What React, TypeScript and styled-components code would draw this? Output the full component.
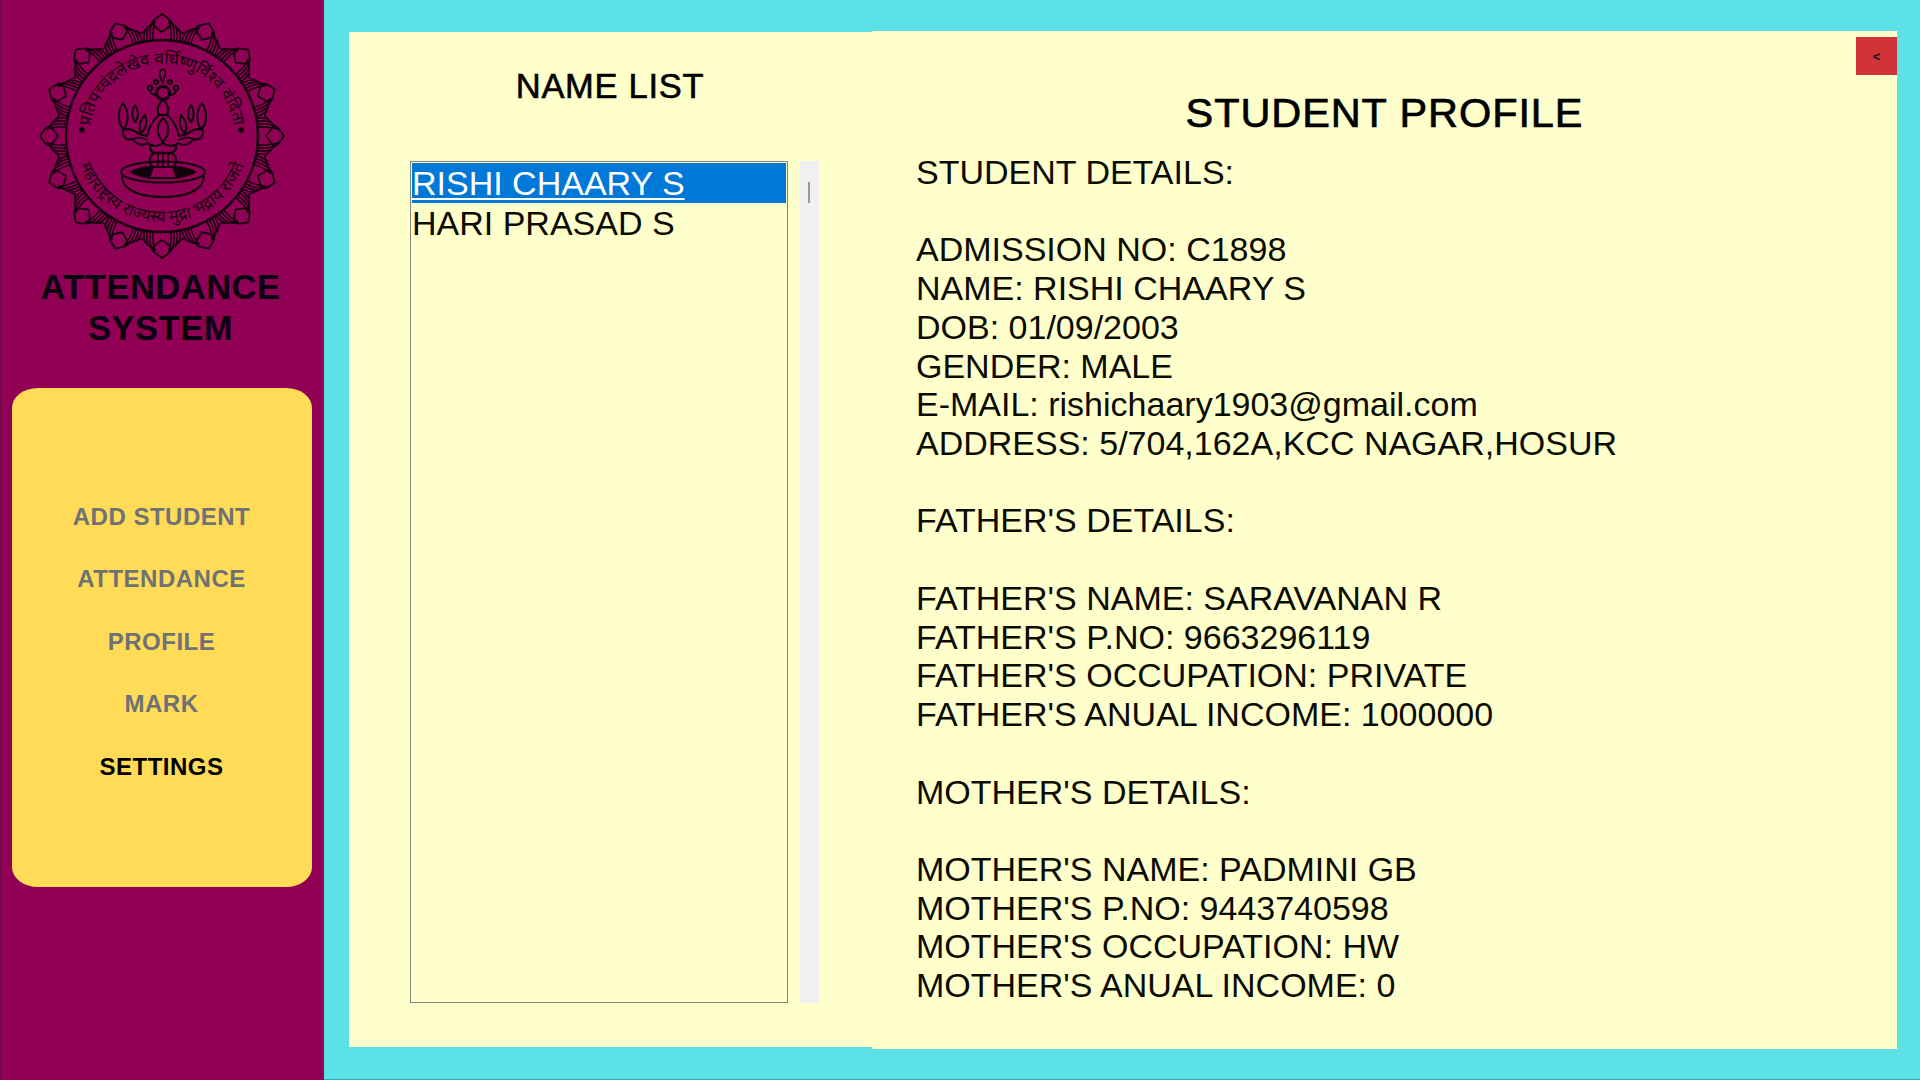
import React from "react";
import styled, { createGlobalStyle } from "styled-components";

const Global = createGlobalStyle`
  html, body { margin: 0; padding: 0; width: 100%; height: 100%; overflow: hidden; }
  body { font-family: "Liberation Sans", Arial, sans-serif; background: #5ce1e6; }
`;

const Page = styled.div`
  display: flex;
  width: 1920px;
  height: 1080px;
`;

const Sidebar = styled.aside`
  display: flex;
  flex: none;
  flex-direction: column;
  align-items: center;
  box-sizing: border-box;
  width: 324px;
  height: 1080px;
  padding-right: 2px;
  background: #900055;
  border-left: 1px solid #6e0a45;
`;

const Emblem = styled.svg`
  display: block;
  flex: none;
  align-self: flex-start;
  margin-left: -1px;
  width: 324px;
  height: 267px;
`;

const AppTitle = styled.h1`
  margin: 0 2px 0 0;
  font-size: 34.5px;
  line-height: 41px;
  font-weight: 700;
  text-align: center;
  color: #0b0010;
  letter-spacing: 0.5px;
`;

const NavCard = styled.nav`
  display: flex;
  flex: none;
  flex-direction: column;
  box-sizing: border-box;
  width: 300px;
  height: 499px;
  margin-top: 39px;
  padding-top: 98px;
  background: #ffdb58;
  border-radius: 26px / 20px;
`;

const NavItem = styled.div<{ $active?: boolean }>`
  height: 62.4px;
  line-height: 62.4px;
  text-align: center;
  font-size: 24px;
  font-weight: 700;
  letter-spacing: 0.5px;
  color: ${(p) => (p.$active ? "#000" : "#6e7275")};
`;

const Main = styled.main`
  flex: 1;
  display: flex;
  align-items: flex-start;
  box-sizing: border-box;
  height: 1080px;
  padding: 31px 0 0 25px;
  background: #5ce1e6;
  border-bottom: 1px solid #3ba9ad;
`;

const ListPanel = styled.section`
  flex: none;
  box-sizing: border-box;
  width: 523px;
  height: 1015px;
  margin-top: 1px;
  padding: 21px 0 0 61px;
  background: #ffffcc;
`;

const ListTitle = styled.h2`
  width: 400px;
  margin: 0 0 42px;
  font-size: 34.5px;
  line-height: 66px;
  font-weight: 400;
  letter-spacing: 0.7px;
  text-align: center;
  color: #000;
  -webkit-text-stroke: 0.6px #000;
`;

const ListRow = styled.div`
  display: flex;
  gap: 12px;
`;

const NameBox = styled.div`
  box-sizing: border-box;
  width: 378px;
  height: 842px;
  padding: 1px;
  border: 1px solid #86867c;
`;

const NameItem = styled.div<{ $selected?: boolean }>`
  height: 40px;
  line-height: 40px;
  font-size: 34px;
  white-space: nowrap;
  color: ${(p) => (p.$selected ? "#fff" : "#0b0b00")};
  background: ${(p) => (p.$selected ? "#0078d7" : "transparent")};
  text-decoration: ${(p) => (p.$selected ? "underline" : "none")};
  text-decoration-thickness: 2px;
  text-underline-offset: 3px;
`;

const ScrollTrack = styled.div`
  box-sizing: border-box;
  width: 19px;
  height: 842px;
  padding: 21px 0 0 8px;
  background: #f0f0f0;
`;

const ScrollThumb = styled.div`
  width: 2px;
  height: 21px;
  background: #999;
`;

const ProfilePanel = styled.section`
  position: relative;
  flex: none;
  box-sizing: border-box;
  width: 1025px;
  height: 1018px;
  padding-top: 52px;
  background: #ffffcc;
`;

const CloseButton = styled.div`
  position: absolute;
  top: 6px;
  right: 0;
  display: flex;
  align-items: center;
  justify-content: center;
  width: 41px;
  height: 38px;
  background: #d13438;
  color: #111;
  font-size: 13px;
  font-weight: 700;
`;

const ProfileTitle = styled.h2`
  margin: 0 0 10px;
  font-size: 41.5px;
  line-height: 60px;
  font-weight: 400;
  letter-spacing: 0.9px;
  text-align: center;
  color: #000;
  -webkit-text-stroke: 0.7px #000;
`;

const Details = styled.div`
  padding-left: 44px;
  font-size: 34px;
  line-height: 38.72px;
  color: #0b0b00;
  white-space: nowrap;
`;

const DetailLine = styled.div<{ $gap?: boolean }>`
  margin-top: ${(p) => (p.$gap ? "38.72px" : "0")};
`;

const CX = 162;
const CY = 136;

const polar = (r: number, deg: number) => {
  const a = ((deg - 90) * Math.PI) / 180;
  return [CX + r * Math.cos(a), CY + r * Math.sin(a)];
};

const f = (n: number) => n.toFixed(1);

const petalPath = (deg: number, r0: number, r1: number, w: number) => {
  const [x0, y0] = polar(r0, deg);
  const [x1, y1] = polar(r1, deg);
  const [ax, ay] = polar(r0 + (r1 - r0) * 0.55, deg - w);
  const [bx, by] = polar(r0 + (r1 - r0) * 0.55, deg + w);
  return `M${f(x0)} ${f(y0)}C${f(ax)} ${f(ay)} ${f(ax)} ${f(ay)} ${f(x1)} ${f(y1)}C${f(bx)} ${f(by)} ${f(bx)} ${f(by)} ${f(x0)} ${f(y0)}Z`;
};

const flame = (deg: number, lean: number, len: number, hook: number) => {
  const [x0, y0] = polar(97, deg);
  const [cx, cy] = polar(97 + len * 0.6, deg);
  const [x1, y1] = polar(97 + len, deg + lean);
  const [x2, y2] = polar(97 + len - 3, deg + hook);
  return `M${f(x0)} ${f(y0)}Q${f(cx)} ${f(cy)} ${f(x1)} ${f(y1)}L${f(x2)} ${f(y2)}`;
};

const PETALS = Array.from({ length: 16 }, (_, i) => i * 22.5);
const FLAMES = PETALS.flatMap((base) => {
  const out: string[] = [];
  for (let k = 0; k < 4; k++) {
    const off = 5.2 + k * 1.8;
    const len = 18 - k * 2.4;
    out.push(flame(base + off, -1.8, len, 0.6));
    out.push(flame(base + 22.5 - off, 1.8, len, -0.6));
  }
  return out;
});

const INK = "#12000c";

const Seal = () => (
  <Emblem viewBox="0 0 324 267" aria-label="Emblem">
    <g fill="none" stroke={INK} strokeWidth="1.5" strokeLinecap="round" strokeLinejoin="round">
      <circle cx={CX} cy={CY} r="96" strokeWidth="2.4" />
      {PETALS.map((d) => (
        <path key={d} d={petalPath(d, 104, 122, 6.5)} strokeWidth="1.7" />
      ))}
      {FLAMES.map((d, i) => (
        <path key={i} d={d} strokeWidth="1.4" />
      ))}
      <path id="emblem-top" d={`M${CX - 72} ${CY - 8}A72.5 72.5 0 0 1 ${CX + 72} ${CY - 8}`} stroke="none" />
      <path id="emblem-bottom" d={`M${CX - 87} ${CY + 8}A87.5 87.5 0 0 0 ${CX + 87} ${CY + 8}`} stroke="none" />
    </g>
    <g fill={INK} fontFamily="'Noto Sans', 'Liberation Sans', sans-serif" fontSize="16.5">
      <text textAnchor="middle">
        <textPath href="#emblem-top" startOffset="50%">प्रतिपच्चंद्रलेखेव वर्धिष्णुर्विश्व वंदिता</textPath>
      </text>
      <text textAnchor="middle">
        <textPath href="#emblem-bottom" startOffset="50%">महाराष्ट्रस्य राज्यस्य मुद्रा भद्राय राजते</textPath>
      </text>
      <circle cx="82" cy="130" r="2.8" />
      <circle cx="241" cy="130" r="2.8" />
    </g>
    <g fill="none" stroke={INK} strokeWidth="2" strokeLinecap="round" strokeLinejoin="round">
      <path d="M163 83C160 78 158 73 161 70C164 68 167 71 165 75C164 78 163 80 163 83Z" strokeWidth="1.6" />
      <circle cx="163" cy="93" r="6.5" strokeWidth="3" />
      <circle cx="150" cy="88" r="2.2" /><circle cx="176" cy="88" r="2.2" />
      <circle cx="156" cy="82" r="2" /><circle cx="170" cy="82" r="2" />
      <path d="M150 91C152 96 156 95 157 93M176 91C174 96 170 95 169 93" />
      <path d="M163 100C158 104 156 110 159 115H167C170 110 168 104 163 100Z" />
      <path d="M123 103C117 112 118 125 124 129C129 122 129 111 123 103Z" />
      <path d="M135 105C131 111 132 119 135 122C139 118 139 111 135 105Z" />
      <path d="M202 103C208 112 207 125 201 129C196 122 196 111 202 103Z" />
      <path d="M191 105C195 111 194 119 191 122C187 118 187 111 191 105Z" />
      <path d="M145 115C140 120 138 127 141 133C146 129 148 122 145 115Z" />
      <path d="M181 115C186 120 188 127 185 133C180 129 178 122 181 115Z" />
      <path d="M163 118C157 124 155 133 163 142C171 133 169 124 163 118Z" />
      <path d="M159 115C153 120 149 127 147 136M167 115C173 120 177 127 179 136" />
      <path d="M123 130C128 128 134 130 139 134L147 136M203 130C198 128 192 130 187 134L179 136" />
      <path d="M123 130C122 137 127 141 133 139C136 145 143 146 148 143C152 147 158 147 163 143C168 147 174 147 178 143C183 146 190 145 193 139C199 141 204 137 203 130" />
      <path d="M133 139C136 137 142 137 147 140M193 139C190 137 184 137 179 140" strokeWidth="1.6" />
      <path d="M150 146C150 150 152 152 154 153H172C174 152 176 150 176 146" strokeWidth="2.4" />
      <path d="M154 153C149 157 148 163 153 167H173C178 163 177 157 172 153Z" />
      <path d="M158 154L158 166M163 154V166M168 154L168 166" strokeWidth="1.6" />
      <ellipse cx="163" cy="172" rx="42" ry="10.5" />
      <path d="M122 176C122 188 136 197 163 197C190 197 204 188 204 176" />
    </g>
    <path d="M129 172C137 167 146 166 153 166L149 178H177L173 166C180 166 189 167 197 172C189 177 178 179 163 179C148 179 137 177 129 172Z" fill={INK} />
    <path d="M153 167H173L177 178H149Z" fill="none" stroke={INK} strokeWidth="2" />
  </Emblem>
);

const NAV = ["ADD STUDENT", "ATTENDANCE", "PROFILE", "MARK", "SETTINGS"];

const SECTIONS = [
  {
    head: "STUDENT DETAILS:",
    lines: [
      "ADMISSION NO: C1898",
      "NAME: RISHI CHAARY S",
      "DOB: 01/09/2003",
      "GENDER: MALE",
      "E-MAIL: rishichaary1903@gmail.com",
      "ADDRESS: 5/704,162A,KCC NAGAR,HOSUR",
    ],
  },
  {
    head: "FATHER'S DETAILS:",
    lines: [
      "FATHER'S NAME: SARAVANAN R",
      "FATHER'S P.NO: 9663296119",
      "FATHER'S OCCUPATION: PRIVATE",
      "FATHER'S ANUAL INCOME: 1000000",
    ],
  },
  {
    head: "MOTHER'S DETAILS:",
    lines: [
      "MOTHER'S NAME: PADMINI GB",
      "MOTHER'S P.NO: 9443740598",
      "MOTHER'S OCCUPATION: HW",
      "MOTHER'S ANUAL INCOME: 0",
    ],
  },
];

export default function App() {
  return (
    <Page>
      <Global />
      <Sidebar>
        <Seal />
        <AppTitle>
          ATTENDANCE
          <br />
          SYSTEM
        </AppTitle>
        <NavCard>
          {NAV.map((n) => (
            <NavItem key={n} $active={n === "SETTINGS"}>
              {n}
            </NavItem>
          ))}
        </NavCard>
      </Sidebar>
      <Main>
        <ListPanel>
          <ListTitle>NAME LIST</ListTitle>
          <ListRow>
            <NameBox>
              <NameItem $selected>RISHI CHAARY S</NameItem>
              <NameItem>HARI PRASAD S</NameItem>
            </NameBox>
            <ScrollTrack>
              <ScrollThumb />
            </ScrollTrack>
          </ListRow>
        </ListPanel>
        <ProfilePanel>
          <CloseButton>&lt;</CloseButton>
          <ProfileTitle>STUDENT PROFILE</ProfileTitle>
          <Details>
            {SECTIONS.map((s, i) => (
              <React.Fragment key={s.head}>
                <DetailLine $gap={i > 0}>{s.head}</DetailLine>
                {s.lines.map((l, j) => (
                  <DetailLine key={l} $gap={j === 0}>
                    {l}
                  </DetailLine>
                ))}
              </React.Fragment>
            ))}
          </Details>
        </ProfilePanel>
      </Main>
    </Page>
  );
}
